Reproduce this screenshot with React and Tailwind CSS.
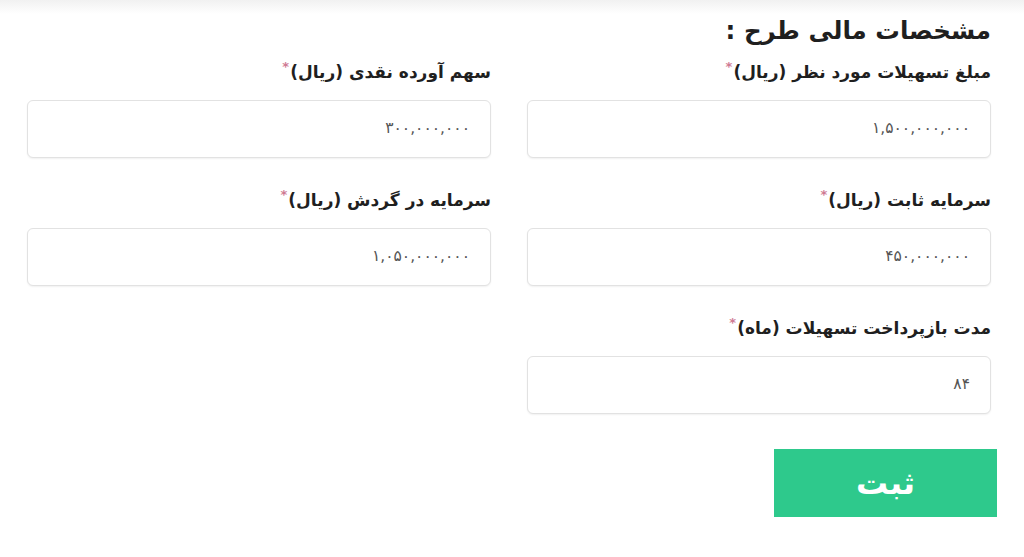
import React from "react";

const fields = [
  { label: "مبلغ تسهیلات مورد نظر (ریال)", value: "۱,۵۰۰,۰۰۰,۰۰۰" },
  { label: "سهم آورده نقدی (ریال)", value: "۳۰۰,۰۰۰,۰۰۰" },
  { label: "سرمایه ثابت (ریال)", value: "۴۵۰,۰۰۰,۰۰۰" },
  { label: "سرمایه در گردش (ریال)", value: "۱,۰۵۰,۰۰۰,۰۰۰" },
  { label: "مدت بازپرداخت تسهیلات (ماه)", value: "۸۴" },
];

function Field({ label, value }) {
  return (
    <div className="flex flex-col">
      <div className="h-[28px] flex items-center text-[17px] font-bold text-[#1f1f1f] leading-[28px]">
        <span>{label}</span>
        <span className="text-[#cf7a93] text-[13px] self-start leading-[18px] mr-[1px]">*</span>
      </div>
      <div className="mt-[14px] h-[58px] rounded-[6px] border border-[#e2e2e2] bg-white shadow-[0_1px_2px_rgba(0,0,0,0.06)] flex items-center pr-[20px] text-[15.5px] text-[#555]">
        {value}
      </div>
    </div>
  );
}

export default function App() {
  return (
    <div
      dir="rtl"
      className="w-[1024px] h-[557px] bg-white relative overflow-hidden"
      style={{ fontFamily: '"DejaVu Sans", sans-serif' }}
    >
      <div className="absolute inset-x-0 top-0 h-[14px] bg-gradient-to-b from-[#f1f1f1] to-white" />
      <div className="relative pr-[33px] pl-[27px] pt-[12px]">
        <h2 className="text-[24.5px] font-bold text-[#1f1f1f] leading-[38px] h-[36px]">
          مشخصات مالی طرح :
        </h2>
        <div className="mt-[10px] grid grid-cols-2 gap-x-[36px] gap-y-[28px]">
          {fields.map((f) => (
            <Field key={f.label} {...f} />
          ))}
        </div>
        <div className="mt-[35px] flex">
          <button className="-mr-[6px] w-[223px] h-[68px] bg-[#2ec98c] text-white text-[32px] font-bold flex items-center justify-center">
            ثبت
          </button>
        </div>
      </div>
    </div>
  );
}
